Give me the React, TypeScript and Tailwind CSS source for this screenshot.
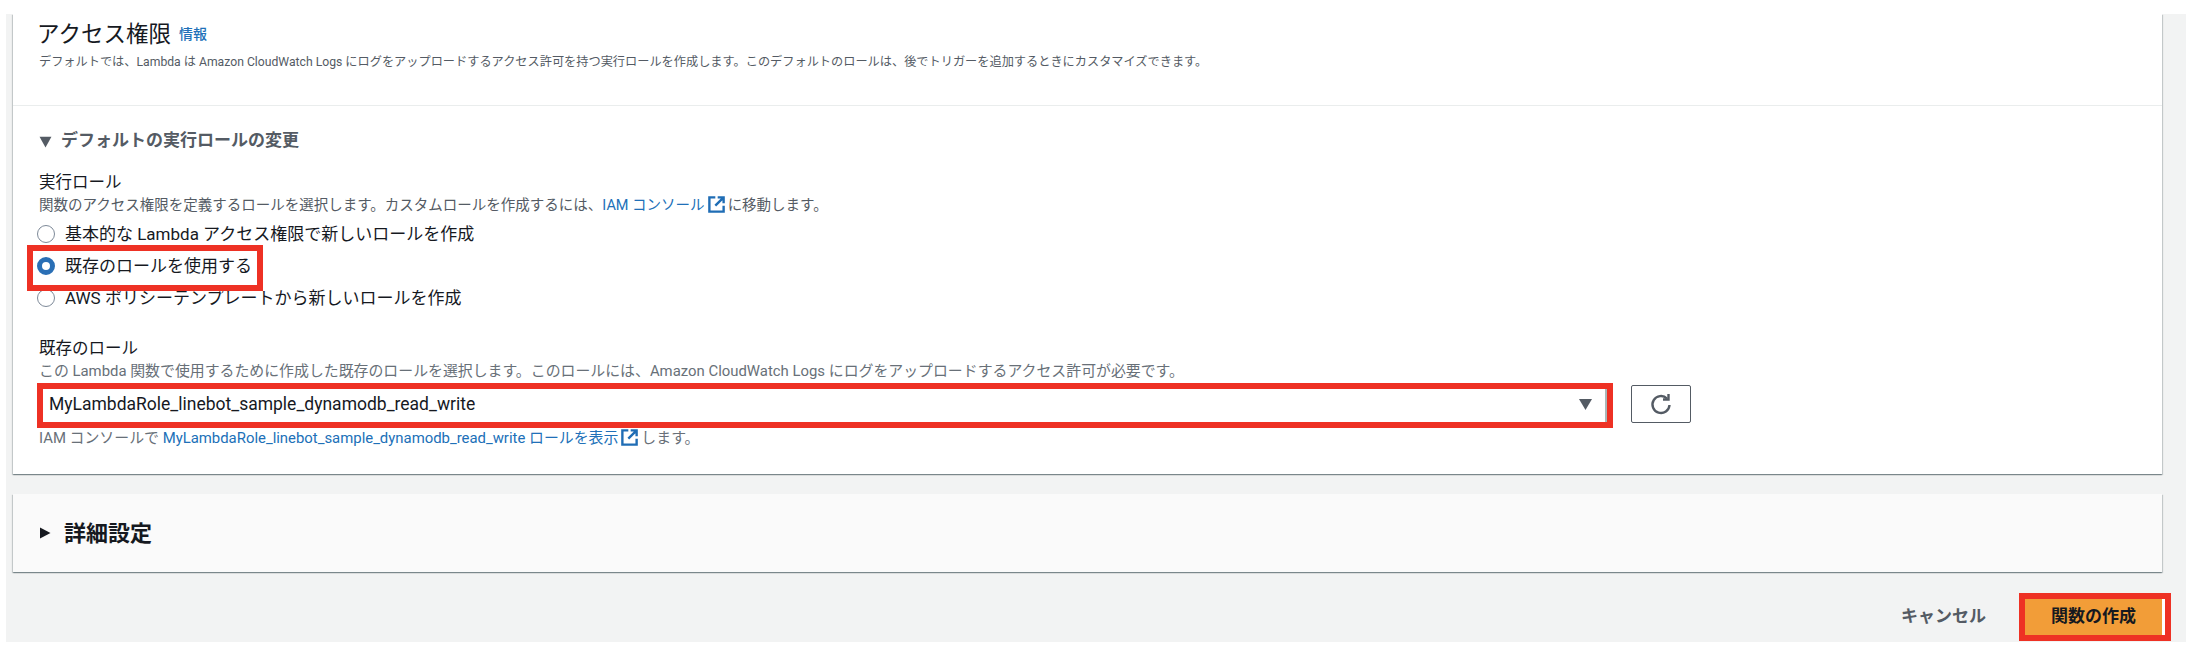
import React from "react";

const font = { fontFamily: '"Roboto", "Noto Sans CJK JP", sans-serif' };

function ExternalIcon() {
  return (
    <svg viewBox="0 0 16 16" className="inline-block w-[19px] h-[19px] align-[-4px] mx-[2px]" fill="none" stroke="#1f6db5" strokeWidth="2">
      <path d="M7 2H2v12h12V9" />
      <path d="M9 2h5v5M14 2L7 9" />
    </svg>
  );
}

function Radio({ checked, label }: { checked?: boolean; label: string }) {
  return (
    <div className="flex items-center h-[32px] ml-[-2px]">
      {checked ? (
        <span className="w-[18px] h-[18px] rounded-full border-[5px] border-[#2a6fb5] bg-white shrink-0" />
      ) : (
        <span className="w-[18px] h-[18px] rounded-full border border-[#7d8998] bg-white shrink-0" />
      )}
      <span className="ml-[10px] text-[17px] leading-[20px] text-[#16191f]">{label}</span>
    </div>
  );
}

export default function App() {
  return (
    <div className="w-[2186px] h-[654px] bg-white overflow-hidden" style={font}>
      <div className="relative ml-[6px] mt-[14px] h-[628px] bg-[#f2f3f3] pl-[7px] pr-[24px]">
        <div className="bg-white h-[460px] shadow-[0_1px_1px_0_rgba(0,28,36,0.3),1px_1px_1px_0_rgba(0,28,36,0.15),-1px_1px_1px_0_rgba(0,28,36,0.15)]">
          <div className="h-[92px] pl-[26px] border-b border-[#eaeded]">
            <div className="flex items-center pt-[6px]">
              <span className="ml-[-2px] text-[22.5px] leading-[28px] text-[#16191f]">アクセス権限</span>
              <span className="ml-[8px] text-[14px] leading-[20px] font-medium text-[#2070b8]">情報</span>
            </div>
            <p className="mt-[6px] text-[12.2px] leading-[16px] text-[#545b64]">
              デフォルトでは、Lambda は Amazon CloudWatch Logs にログをアップロードするアクセス許可を持つ実行ロールを作成します。このデフォルトのロールは、後でトリガーを追加するときにカスタマイズできます。
            </p>
          </div>
          <div className="pl-[26px]">
            <div className="flex items-center mt-[25px] h-[20px]">
              <svg viewBox="0 0 12 12" className="w-[13px] h-[13px]" fill="#545b64"><path d="M0.5 1.5h11L6 11.5z" /></svg>
              <span className="ml-[9px] text-[17px] font-bold text-[#545b64]">デフォルトの実行ロールの変更</span>
            </div>
            <div className="mt-[22px] text-[16.5px] leading-[20px] text-[#16191f]">実行ロール</div>
            <p className="mt-[2px] text-[14.5px] leading-[18px] text-[#545b64]">
              関数のアクセス権限を定義するロールを選択します。カスタムロールを作成するには、<span className="text-[#2070b8]">IAM コンソール</span>
              <ExternalIcon />に移動します。
            </p>
            <div className="mt-[3px]">
              <Radio label="基本的な Lambda アクセス権限で新しいロールを作成" />
              <Radio checked label="既存のロールを使用する" />
              <Radio label="AWS ポリシーテンプレートから新しいロールを作成" />
            </div>
            <div className="mt-[25px] text-[16.5px] leading-[20px] text-[#16191f]">既存のロール</div>
            <p className="mt-[3px] text-[14.9px] leading-[18px] text-[#687078]">
              この Lambda 関数で使用するために作成した既存のロールを選択します。このロールには、Amazon CloudWatch Logs にログをアップロードするアクセス許可が必要です。
            </p>
            <div className="flex items-center mt-[5px]">
              <div className="w-[1568px] h-[38px] border-r-2 border-[#aab7b8] flex items-center justify-between pl-[10px] pr-[13px]">
                <span className="text-[17.5px] text-[#16191f]">MyLambdaRole_linebot_sample_dynamodb_read_write</span>
                <svg viewBox="0 0 12 12" className="w-[13px] h-[13px]" fill="#545b64"><path d="M0 1h12L6 11z" /></svg>
              </div>
              <button className="ml-[24px] w-[60px] h-[38px] border border-[#545b64] rounded-[2px] bg-white flex items-center justify-center">
                <svg viewBox="0 0 24 24" className="w-[24px] h-[24px]" fill="none" stroke="#545b64" strokeWidth="2.4">
                  <path d="M18 6.5A8.5 8.5 0 1 0 20.5 13" />
                  <path d="M19.5 2v5.5H14" />
                </svg>
              </button>
            </div>
            <p className="mt-[5px] text-[14.9px] leading-[18px] text-[#687078]">
              IAM コンソールで <span className="text-[#2070b8]">MyLambdaRole_linebot_sample_dynamodb_read_write ロールを表示</span>
              <ExternalIcon />します。
            </p>
          </div>
        </div>
        <div className="mt-[20px] h-[78px] bg-[#fafafa] flex items-center pl-[26px] shadow-[0_1px_1px_0_rgba(0,28,36,0.3),1px_1px_1px_0_rgba(0,28,36,0.15),-1px_1px_1px_0_rgba(0,28,36,0.15)]">
          <svg viewBox="0 0 12 12" className="w-[12px] h-[12px]" fill="#16191f"><path d="M1 0.5l10.5 5.5L1 11.5z" /></svg>
          <span className="ml-[13px] text-[22px] font-bold text-[#16191f]">詳細設定</span>
        </div>
        <div className="flex items-center justify-end mt-[27px] mr-[-3px]">
          <span className="text-[17px] font-bold text-[#545b64] mr-[39px]">キャンセル</span>
          <button className="w-[140px] h-[36px] bg-[#f29d38] border-r-[3px] border-white text-[17px] font-bold text-[#16191f]">関数の作成</button>
        </div>
        <div className="absolute left-[21px] top-[231px] w-[236px] h-[46px] border-[6px] border-[#ee3124]" />
        <div className="absolute left-[31px] top-[369px] w-[1576px] h-[45px] border-[6px] border-[#ee3124]" />
        <div className="absolute left-[2013px] top-[579px] w-[152px] h-[48px] border-[6px] border-[#ee3124]" />
      </div>
    </div>
  );
}
